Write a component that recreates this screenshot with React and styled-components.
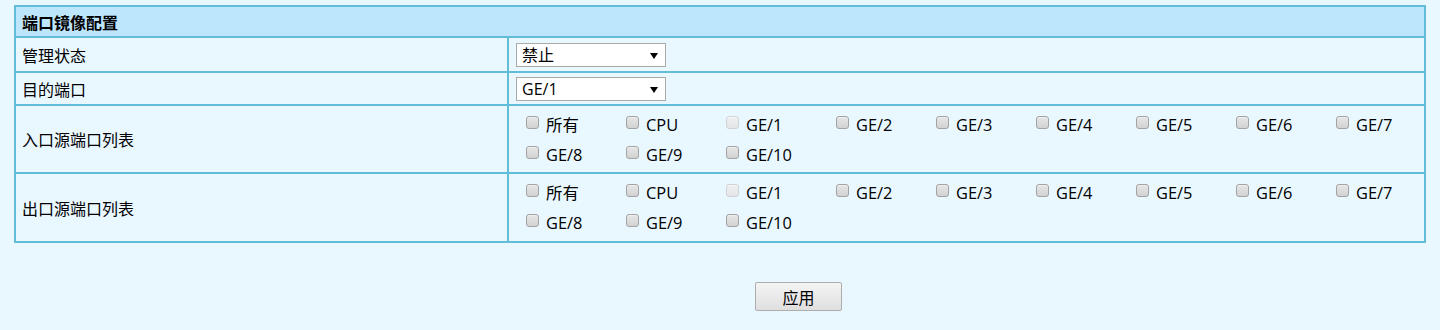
import React from "react";
import styled, { createGlobalStyle } from "styled-components";

const GlobalStyle = createGlobalStyle`
  html, body {
    margin: 0;
    padding: 0;
    background: #e9f7ff;
  }
  body {
    font-family: "Open Sans", "Noto Sans CJK SC", sans-serif;
    font-size: 16px;
    color: #000;
  }
`;

const Page = styled.div`
  padding-top: 5px;
  height: 325px;
`;

const Table = styled.div`
  margin: 0 14px;
  display: grid;
  grid-template-columns: 493px 1fr;
  grid-template-rows: 31px 35px 33px 68px 69px;
  border-top: 2px solid #62bdd9;
  border-left: 2px solid #62bdd9;
`;

const Cell = styled.div`
  box-sizing: border-box;
  border-right: 2px solid #62bdd9;
  border-bottom: 2px solid #62bdd9;
  display: flex;
`;

const HeaderCell = styled(Cell)`
  grid-column: 1 / span 2;
  background: #bde5fb;
  align-items: center;
  padding-left: 6px;
  font-weight: bold;
  font-family: "Noto Sans CJK SC", sans-serif;
  font-size: 16px;
`;

const LabelCell = styled(Cell)`
  align-items: center;
  padding-left: 6px;
  font-family: "Noto Sans CJK SC", sans-serif;
`;

const ValueCell = styled(Cell)`
  align-items: ${(p) => (p.$top ? "flex-start" : "center")};
  padding-left: ${(p) => (p.$top ? 13 : 7)}px;
  padding-top: ${(p) => (p.$top ? 5 : 0)}px;
`;

const SelectWrap = styled.div`
  position: relative;
  width: 150px;
  height: 24px;
`;

const Select = styled.select`
  appearance: none;
  -webkit-appearance: none;
  width: 150px;
  height: 24px;
  box-sizing: border-box;
  border: 1px solid #a9a9a9;
  border-radius: 0;
  background: #fff;
  padding: 0 0 0 5px;
  font-family: "Open Sans", "Noto Sans CJK SC", sans-serif;
  font-size: 16px;
  color: #000;
  outline: none;
`;

const Arrow = styled.svg`
  position: absolute;
  right: 8px;
  top: 10px;
  pointer-events: none;
`;

const Ports = styled.div`
  display: grid;
  grid-template-columns: 100px 100px 110px 100px 100px 100px 100px 100px auto;
  grid-auto-rows: 30px;
`;

const Item = styled.label`
  display: flex;
  align-items: flex-start;
  height: 30px;
  white-space: nowrap;
  line-height: 30px;
`;

const Box = styled.span`
  display: inline-block;
  box-sizing: border-box;
  width: 13px;
  height: 13px;
  margin: 5px 7px 0 4px;
  border-radius: 3px;
  border: 1px solid ${(p) => (p.$disabled ? "#cfd3d6" : "#a3a3a3")};
  background: ${(p) =>
    p.$disabled
      ? "linear-gradient(#eef0f1, #e3e5e6)"
      : "linear-gradient(#e6e6e6, #d2d2d2)"};
  box-shadow: inset 0 1px 0 ${(p) => (p.$disabled ? "#f6f7f8" : "#efefef")};
`;

const ItemText = styled.span`
  font-size: 16.4px;
  line-height: 30px;
  margin-top: -1px;
`;

const Footer = styled.div`
  padding-top: 39px;
  padding-left: 755px;
`;

const Button = styled.button`
  width: 87px;
  height: 29px;
  box-sizing: border-box;
  border: 1px solid #adadad;
  border-radius: 2px;
  background: linear-gradient(#f4f4f4, #dfdfdf);
  font-family: "Noto Sans CJK SC", sans-serif;
  font-size: 16px;
  color: #000;
  padding: 0;
`;

const ports = ["所有", "CPU", "GE/1", "GE/2", "GE/3", "GE/4", "GE/5", "GE/6", "GE/7", "GE/8", "GE/9", "GE/10"];

function PortList() {
  return (
    <Ports>
      {ports.map((p) => (
        <Item key={p}>
          <Box $disabled={p === "GE/1"} />
          <ItemText>{p}</ItemText>
        </Item>
      ))}
    </Ports>
  );
}

function Dropdown({ value, options }) {
  return (
    <SelectWrap>
      <Select defaultValue={value}>
        {options.map((o) => (
          <option key={o}>{o}</option>
        ))}
      </Select>
      <Arrow width="8" height="6" viewBox="0 0 8 6">
        <path d="M0 0 H8 L4 6 Z" fill="#000" />
      </Arrow>
    </SelectWrap>
  );
}

export default function App() {
  return (
    <>
      <GlobalStyle />
      <Page>
        <Table>
          <HeaderCell>端口镜像配置</HeaderCell>
          <LabelCell>管理状态</LabelCell>
          <ValueCell>
            <Dropdown value="禁止" options={["禁止", "启用"]} />
          </ValueCell>
          <LabelCell>目的端口</LabelCell>
          <ValueCell>
            <Dropdown value="GE/1" options={["GE/1", "GE/2", "GE/3"]} />
          </ValueCell>
          <LabelCell>入口源端口列表</LabelCell>
          <ValueCell $top>
            <PortList />
          </ValueCell>
          <LabelCell>出口源端口列表</LabelCell>
          <ValueCell $top>
            <PortList />
          </ValueCell>
        </Table>
        <Footer>
          <Button>应用</Button>
        </Footer>
      </Page>
    </>
  );
}
